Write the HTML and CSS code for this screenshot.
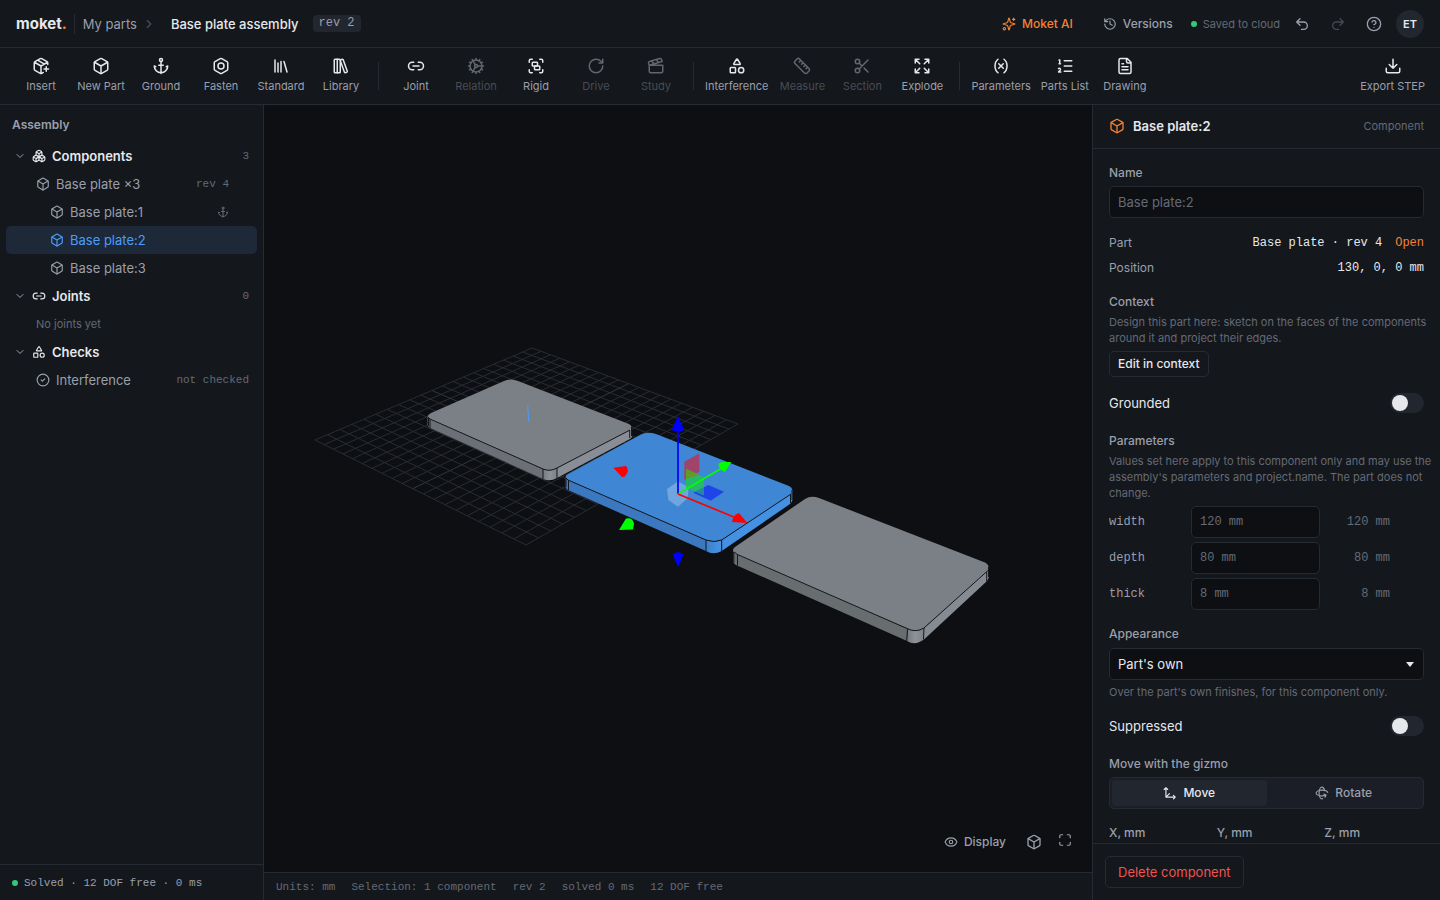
FILE: index.html
```html
<!DOCTYPE html>
<html lang="en">
<head>
<meta charset="utf-8">
<title>Base plate assembly - moket.</title>
<link rel="stylesheet" href="styles.css">
</head>
<body>
<svg class="sprite" aria-hidden="true">
  <symbol id="box" viewBox="0 0 24 24"><path d="M21 8a2 2 0 0 0-1-1.73l-7-4a2 2 0 0 0-2 0l-7 4A2 2 0 0 0 3 8v8a2 2 0 0 0 1 1.73l7 4a2 2 0 0 0 2 0l7-4A2 2 0 0 0 21 16Z"/><path d="m3.3 7 8.7 5 8.7-5M12 22V12"/></symbol>
  <symbol id="package-plus" viewBox="0 0 24 24"><path d="M16 16h6M19 13v6M21 10V8a2 2 0 0 0-1-1.73l-7-4a2 2 0 0 0-2 0l-7 4A2 2 0 0 0 3 8v8a2 2 0 0 0 1 1.73l7 4a2 2 0 0 0 2 0l2-1.14M7.5 4.27l9 5.15M3.29 7 12 12l8.71-5M12 22V12"/></symbol>
  <symbol id="anchor" viewBox="0 0 24 24"><path d="M12 6v16M19 13l2-1a9 9 0 0 1-18 0l2 1M9 11h6"/><circle cx="12" cy="4" r="2"/></symbol>
  <symbol id="nut" viewBox="0 0 24 24"><path d="M21 16V8a2 2 0 0 0-1-1.73l-7-4a2 2 0 0 0-2 0l-7 4A2 2 0 0 0 3 8v8a2 2 0 0 0 1 1.73l7 4a2 2 0 0 0 2 0l7-4A2 2 0 0 0 21 16z"/><circle cx="12" cy="12" r="4"/></symbol>
  <symbol id="library" viewBox="0 0 24 24"><path d="m16 6 4 14M12 6v14M8 8v12M4 4v16"/></symbol>
  <symbol id="library-big" viewBox="0 0 24 24"><rect x="3" y="3" width="8" height="18" rx="1"/><path d="M7 3v18M20.4 18.9c.2.5-.1 1.1-.6 1.3l-1.9.7c-.5.2-1.1-.1-1.3-.6L11.1 5.1c-.2-.5.1-1.1.6-1.3l1.9-.7c.5-.2 1.1.1 1.3.6Z"/></symbol>
  <symbol id="link" viewBox="0 0 24 24"><path d="M9 17H7A5 5 0 0 1 7 7h2M15 7h2a5 5 0 1 1 0 10h-2M8 12h8"/></symbol>
  <symbol id="cog" viewBox="0 0 24 24"><circle cx="12" cy="12" r="8"/><circle cx="12" cy="12" r="2"/><path d="M12 2v2M12 22v-2M17 20.66l-1-1.73M11 10.27 7 3.34M20.66 17l-1.73-1M3.34 7l1.73 1M14 12h8M2 12h2M20.66 7l-1.73 1M3.34 17l1.73-1M17 3.34l-1 1.73M11 13.73l-4 6.93"/></symbol>
  <symbol id="group" viewBox="0 0 24 24"><path d="M3 7V5c0-1.1.9-2 2-2h2M17 3h2c1.1 0 2 .9 2 2v2M21 17v2c0 1.1-.9 2-2 2h-2M7 21H5c-1.1 0-2-.9-2-2v-2"/><rect x="7" y="7" width="7" height="5" rx="1"/><rect x="10" y="12" width="7" height="5" rx="1"/></symbol>
  <symbol id="rotate" viewBox="0 0 24 24"><path d="M21 12a9 9 0 1 1-9-9c2.52 0 4.93 1 6.74 2.74L21 8M21 3v5h-5"/></symbol>
  <symbol id="clapper" viewBox="0 0 24 24"><path d="M20.2 6 3 11l-.9-2.4c-.3-1.1.3-2.2 1.3-2.5l13.5-4c1.1-.3 2.2.3 2.5 1.3ZM6.2 5.3l3.1 3.9M12.4 3.4l3.1 4M3 11h18v8a2 2 0 0 1-2 2H5a2 2 0 0 1-2-2Z"/></symbol>
  <symbol id="shapes" viewBox="0 0 24 24"><path d="M8.3 10a.7.7 0 0 1-.626-1.079L11.4 3a.7.7 0 0 1 1.198-.043L16.3 8.9a.7.7 0 0 1-.572 1.1Z"/><rect x="3" y="14" width="7" height="7" rx="1"/><circle cx="17.5" cy="17.5" r="3.5"/></symbol>
  <symbol id="ruler" viewBox="0 0 24 24"><path d="M21.3 15.3a2.4 2.4 0 0 1 0 3.4l-2.6 2.6a2.4 2.4 0 0 1-3.4 0L2.7 8.7a2.41 2.41 0 0 1 0-3.4l2.6-2.6a2.41 2.41 0 0 1 3.4 0ZM14.5 12.5l2-2M11.5 9.5l2-2M8.5 6.5l2-2M17.5 15.5l2-2"/></symbol>
  <symbol id="scissors" viewBox="0 0 24 24"><circle cx="6" cy="6" r="3"/><circle cx="6" cy="18" r="3"/><path d="M8.12 8.12 12 12M20 4 8.12 15.88M14.8 14.8 20 20"/></symbol>
  <symbol id="expand" viewBox="0 0 24 24"><path d="m15 15 6 6M15 9l6-6M21 16v5h-5M21 8V3h-5M3 16v5h5M3 21l6-6M3 8V3h5M9 9 3 3"/></symbol>
  <symbol id="variable" viewBox="0 0 24 24"><path d="M8 21s-4-3-4-9 4-9 4-9M16 3s4 3 4 9-4 9-4 9M15 9l-6 6M9 9l6 6"/></symbol>
  <symbol id="list" viewBox="0 0 24 24"><path d="M11 5h10M11 12h10M11 19h10M4 4h1v5M4 9h2M6.5 20H3.4c0-1 2.6-1.925 2.6-3.5a1.5 1.5 0 0 0-2.6-1.02"/></symbol>
  <symbol id="file" viewBox="0 0 24 24"><path d="M15 2H6a2 2 0 0 0-2 2v16a2 2 0 0 0 2 2h12a2 2 0 0 0 2-2V7ZM14 2v4a2 2 0 0 0 2 2h4M10 9H8M16 13H8M16 17H8"/></symbol>
  <symbol id="download" viewBox="0 0 24 24"><path d="M12 15V3M21 15v4a2 2 0 0 1-2 2H5a2 2 0 0 1-2-2v-4M7 10l5 5 5-5"/></symbol>
  <symbol id="sparkles" viewBox="0 0 24 24"><path d="M9.937 15.5A2 2 0 0 0 8.5 14.063l-6.135-1.582a.5.5 0 0 1 0-.962L8.5 9.936A2 2 0 0 0 9.937 8.5l1.582-6.135a.5.5 0 0 1 .963 0L14.063 8.5A2 2 0 0 0 15.5 9.937l6.135 1.581a.5.5 0 0 1 0 .964L15.5 14.063a2 2 0 0 0-1.437 1.437l-1.582 6.135a.5.5 0 0 1-.963 0zM20 2v4M22 4h-4"/><circle cx="4" cy="20" r="2"/></symbol>
  <symbol id="history" viewBox="0 0 24 24"><path d="M3 12a9 9 0 1 0 9-9 9.75 9.75 0 0 0-6.74 2.74L3 8M3 3v5h5M12 7v5l4 2"/></symbol>
  <symbol id="undo" viewBox="0 0 24 24"><path d="M9 14 4 9l5-5M4 9h10.5a5.5 5.5 0 0 1 0 11H11"/></symbol>
  <symbol id="redo" viewBox="0 0 24 24"><path d="m15 14 5-5-5-5M20 9H9.5a5.5 5.5 0 0 0 0 11H13"/></symbol>
  <symbol id="help" viewBox="0 0 24 24"><circle cx="12" cy="12" r="10"/><path d="M9.09 9a3 3 0 0 1 5.83 1c0 2-3 3-3 3M12 17h.01"/></symbol>
  <symbol id="right" viewBox="0 0 24 24"><path d="m9 18 6-6-6-6"/></symbol>
  <symbol id="down" viewBox="0 0 24 24"><path d="m6 9 6 6 6-6"/></symbol>
  <symbol id="boxes" viewBox="0 0 24 24"><path d="M2.97 12.92A2 2 0 0 0 2 14.63v3.24a2 2 0 0 0 .97 1.71l3 1.8a2 2 0 0 0 2.06 0L12 19v-5.5l-5-3-4.03 2.42ZM7 16.5l-4.74-2.85M7 16.5l5-3M7 16.5v5.17M12 13.5V19l3.97 2.38a2 2 0 0 0 2.06 0l3-1.8a2 2 0 0 0 .97-1.71v-3.24a2 2 0 0 0-.97-1.71L17 10.5l-5 3ZM17 16.5l-5-3M17 16.5l4.74-2.85M17 16.5v5.17M7.97 4.42A2 2 0 0 0 7 6.13v4.37l5 3 5-3V6.13a2 2 0 0 0-.97-1.71l-3-1.8a2 2 0 0 0-2.06 0l-3 1.8ZM12 8 7.26 5.15M12 8l4.74-2.85M12 13.5V8"/></symbol>
  <symbol id="check" viewBox="0 0 24 24"><circle cx="12" cy="12" r="10"/><path d="m9 12 2 2 4-4"/></symbol>
  <symbol id="eye" viewBox="0 0 24 24"><path d="M2.062 12.348a1 1 0 0 1 0-.696 10.75 10.75 0 0 1 19.876 0 1 1 0 0 1 0 .696 10.75 10.75 0 0 1-19.876 0"/><circle cx="12" cy="12" r="3"/></symbol>
  <symbol id="corners" viewBox="0 0 24 24"><path d="M8 3H5a2 2 0 0 0-2 2v3M21 8V5a2 2 0 0 0-2-2h-3M3 16v3a2 2 0 0 0 2 2h3M16 21h3a2 2 0 0 0 2-2v-3"/></symbol>
  <symbol id="move3d" viewBox="0 0 24 24"><path d="M5 3v16h16M5 19l6-6M2 6l3-3 3 3M18 16l3 3-3 3"/></symbol>
  <symbol id="rotate3d" viewBox="0 0 24 24"><path d="M16.466 7.5C15.643 4.237 13.952 2 12 2 9.239 2 7 6.477 7 12s2.239 10 5 10c.342 0 .677-.069 1-.2M15.194 13.707l3.814 1.86-1.86 3.814M19 15.57c-1.804.885-4.274 1.43-7 1.43-5.523 0-10-2.239-10-5s4.477-5 10-5c4.838 0 8.873 1.718 9.8 4"/></symbol>
</svg>

<div class="app">
  <header class="topbar">
    <a class="logo" href="#">moket<span class="logo-dot">.</span></a>
    <nav class="crumbs" aria-label="Breadcrumb">
      <a class="crumb" href="#">My parts</a>
      <svg class="icon icon-sm chevron"><use href="#right"/></svg>
    </nav>
    <h1 class="doc-title">Base plate assembly</h1>
    <span class="badge">rev 2</span>
    <div class="top-actions">
      <button class="text-btn accent"><svg class="icon icon-sm"><use href="#sparkles"/></svg>Moket AI</button>
      <button class="text-btn"><svg class="icon icon-sm"><use href="#history"/></svg>Versions</button>
      <span class="saved"><span class="dot"></span>Saved to cloud</span>
      <div class="icon-group">
        <button class="icon-btn" aria-label="Undo"><svg class="icon"><use href="#undo"/></svg></button>
        <button class="icon-btn" aria-label="Redo" disabled><svg class="icon"><use href="#redo"/></svg></button>
        <button class="icon-btn" aria-label="Help"><svg class="icon"><use href="#help"/></svg></button>
      </div>
      <button class="avatar" aria-label="Account">ET</button>
    </div>
  </header>

  <div class="toolbar" role="toolbar" aria-label="Tools">
    <button class="tool"><svg class="icon icon-lg"><use href="#package-plus"/></svg>Insert</button>
    <button class="tool"><svg class="icon icon-lg"><use href="#box"/></svg>New Part</button>
    <button class="tool"><svg class="icon icon-lg"><use href="#anchor"/></svg>Ground</button>
    <button class="tool"><svg class="icon icon-lg"><use href="#nut"/></svg>Fasten</button>
    <button class="tool"><svg class="icon icon-lg"><use href="#library"/></svg>Standard</button>
    <button class="tool"><svg class="icon icon-lg"><use href="#library-big"/></svg>Library</button>
    <span class="tool-sep"></span>
    <button class="tool"><svg class="icon icon-lg"><use href="#link"/></svg>Joint</button>
    <button class="tool" disabled><svg class="icon icon-lg"><use href="#cog"/></svg>Relation</button>
    <button class="tool"><svg class="icon icon-lg"><use href="#group"/></svg>Rigid</button>
    <button class="tool" disabled><svg class="icon icon-lg"><use href="#rotate"/></svg>Drive</button>
    <button class="tool" disabled><svg class="icon icon-lg"><use href="#clapper"/></svg>Study</button>
    <span class="tool-sep"></span>
    <button class="tool"><svg class="icon icon-lg"><use href="#shapes"/></svg>Interference</button>
    <button class="tool" disabled><svg class="icon icon-lg"><use href="#ruler"/></svg>Measure</button>
    <button class="tool" disabled><svg class="icon icon-lg"><use href="#scissors"/></svg>Section</button>
    <button class="tool"><svg class="icon icon-lg"><use href="#expand"/></svg>Explode</button>
    <span class="tool-sep"></span>
    <button class="tool"><svg class="icon icon-lg"><use href="#variable"/></svg>Parameters</button>
    <button class="tool"><svg class="icon icon-lg"><use href="#list"/></svg>Parts List</button>
    <button class="tool"><svg class="icon icon-lg"><use href="#file"/></svg>Drawing</button>
    <button class="tool tool-end"><svg class="icon icon-lg"><use href="#download"/></svg>Export STEP</button>
  </div>

  <div class="workspace">
    <aside class="sidebar">
      <h2 class="side-title">Assembly</h2>
      <div class="tree">
        <button class="row group"><svg class="icon icon-xs"><use href="#down"/></svg><svg class="icon icon-sm"><use href="#boxes"/></svg><span>Components</span><span class="meta">3</span></button>
        <button class="row part"><svg class="icon icon-sm"><use href="#box"/></svg><span>Base plate ×3</span><span class="meta">rev 4</span></button>
        <button class="row instance"><svg class="icon icon-sm"><use href="#box"/></svg><span>Base plate:1</span><svg class="icon icon-xs meta"><use href="#anchor"/></svg></button>
        <button class="row instance selected"><svg class="icon icon-sm"><use href="#box"/></svg><span>Base plate:2</span></button>
        <button class="row instance"><svg class="icon icon-sm"><use href="#box"/></svg><span>Base plate:3</span></button>
        <button class="row group"><svg class="icon icon-xs"><use href="#down"/></svg><svg class="icon icon-sm"><use href="#link"/></svg><span>Joints</span><span class="meta">0</span></button>
        <p class="row empty">No joints yet</p>
        <button class="row group"><svg class="icon icon-xs"><use href="#down"/></svg><svg class="icon icon-sm"><use href="#shapes"/></svg><span>Checks</span></button>
        <button class="row check"><svg class="icon icon-sm"><use href="#check"/></svg><span>Interference</span><span class="meta">not checked</span></button>
      </div>
      <div class="side-foot"><span class="dot"></span>Solved · 12 DOF free · 0 ms</div>
    </aside>

    <main class="stage">
      <div class="viewport">
        <svg class="scene" viewBox="264 105 828 767" role="img" aria-label="Three base plates on a grid">
          <defs>
            <linearGradient id="g1"><stop offset="0" stop-color="#777a80"/><stop offset=".5" stop-color="#8e9298"/><stop offset="1" stop-color="#7c8087"/></linearGradient>
            <linearGradient id="g2"><stop offset="0" stop-color="#3d80ca"/><stop offset="1" stop-color="#4795e9"/></linearGradient>
          </defs>
          <path id="grid" class="grid"/>
          <path id="axes" class="grid-axis"/>
          <g class="plate">
            <path fill="#6c6f76" d="M427.5 417V425Q428 427 430 428L543 479V469Z"/>
            <path fill="#898d95" d="M557 468 632 427V436Q632 438 630 439L557 478Z"/>
            <path fill="url(#g1)" d="M543 469Q550 472 557 468V478Q550 482 543 479Z"/>
            <path fill="#7b7f86" d="M430 419Q425 416 431 413L504 381Q511 378 518 381L629 424Q634 427 629 431L557 468Q550 472 543 469Z"/>
            <path class="edge" d="M428 417 430 419 543 469Q550 472 557 468L630 430M543 469V479M557 468V478M430 419V428M428.5 418V426M629.700 430V438M631.500 427V436"/>
          </g>
          <path stroke="#4a9dff" d="m527.700 405 1 16.700"/>
          <g class="plate">
            <path fill="#3b78c0" d="M565.500 478V487Q566 489 568 490L706 551V540Z"/>
            <path fill="#4491e4" d="M721.700 540 792.500 490V500Q792 502 790 504L721.700 551Z"/>
            <path fill="url(#g2)" d="M706 540Q714 543 721.700 540V551Q713 555.500 706 551Z"/>
            <path fill="#3f86d5" d="M568 480Q563 477 568 474L640 435Q647 431 656 434L789 486Q795 489 790 494L721.700 540Q714 543 706 540Z"/>
            <path class="edge" d="M566 478 568 480 706 540Q714 543 721.700 540L791 494M706 540V551M721.700 540V551M568.500 480V490M566 478V487M790.500 494V503M792 490V500"/>
          </g>
          <g class="plate">
            <path fill="#686d70" d="M733.300 551V562Q734 564.500 737 565.500L907 641V628.700Z"/>
            <path fill="#868a92" d="M924 628 989 568V577Q988 580 986 582L924 639.500Z"/>
            <path fill="url(#g1)" d="M907.500 628.700Q916 633 924 628V639.500Q915 646 907 641Z"/>
            <path fill="#7b7f86" d="M737.500 554.500Q730 551 735 547L805 499Q811 495 819 498L985 562.500Q991 566 987 571L924 628Q916 633 907.500 628.700Z"/>
            <path class="edge" d="M734 552 737.500 554.500 907.500 628.700Q916 633 924 628L988 570.500M907.500 629 906.700 641M924 628 923.500 639.500M737.500 554.500V565.500M733.800 552V562.500M986.700 572V581.500M988.500 567V577"/>
          </g>
          <g>
            <path fill="#fff" fill-opacity=".26" d="M667 489 678 481.300 688.700 487.300 687.700 498.300 678 506.700 668.300 500Z"/>
            <path fill="#1f44e8" d="M693.300 492.700 708.300 485 724 491.700 710.700 500.700Z"/>
            <path fill="#a0446c" d="M684.300 461.700 699.300 453.300V471.700L684.300 480Z"/>
            <path fill="#26b96e" d="M686 468.700 704 477.300V495.300L686 487.300Z"/>
            <path fill="#629c28" d="M686 468.700 699.300 475 686 479Z"/>
            <path fill="#2588a0" d="M695 491.500 704 487V495.300Z"/>
            <path stroke="#00f" stroke-width="1.700" d="M678 494V430"/>
            <path fill="#00f" d="M678 416 684.300 430Q678 433 671.700 430Z"/>
            <path stroke="#0f0" stroke-width="1.700" d="M678 494 722 468"/>
            <path fill="#0f0" d="M731.300 462 725 472Q719 470 718.300 464Q720 462.500 722 462Z"/>
            <path stroke="red" stroke-width="1.700" d="M678 494 735 517.500"/>
            <path fill="red" d="M747.300 523 732 522Q733 515 739 513Z"/>
            <path fill="red" d="M613.300 467.700 626 466Q630 470 625 476.500L622 477Z"/>
            <path fill="#0f0" d="M619 530 626 518.500Q633 517 634 524L633 529.500Z"/>
            <path fill="#00f" d="M678 567 672.700 554.500Q678 550 683.500 554.500Z"/>
          </g>
        </svg>
        <div class="view-controls">
          <button class="text-btn"><svg class="icon icon-sm"><use href="#eye"/></svg>Display</button>
          <button class="icon-btn" aria-label="View cube"><svg class="icon"><use href="#box"/></svg></button>
          <button class="icon-btn fit" aria-label="Fit view"><svg class="icon"><use href="#corners"/></svg></button>
        </div>
      </div>
      <footer class="status"><span>Units: mm</span><span>Selection: 1 component</span><span>rev 2</span><span>solved 0 ms</span><span>12 DOF free</span></footer>
    </main>

    <aside class="inspector">
      <header class="insp-head"><svg class="icon"><use href="#box"/></svg><h2 class="insp-title">Base plate:2</h2><span class="insp-kind">Component</span></header>
      <form class="insp-body">
        <div class="field"><label class="label" for="name">Name</label><input class="input" id="name" placeholder="Base plate:2"></div>
        <dl class="facts">
          <div class="fact"><dt>Part</dt><dd>Base plate · rev 4<a class="open" href="#">Open</a></dd></div>
          <div class="fact"><dt>Position</dt><dd>130, 0, 0 mm</dd></div>
        </dl>
        <section class="field">
          <h3 class="label">Context</h3>
          <p class="hint">Design this part here: sketch on the faces of the components around it and project their edges.</p>
          <button type="button" class="btn btn-sm">Edit in context</button>
        </section>
        <div class="switch-row"><label for="grounded">Grounded</label><input type="checkbox" class="switch" id="grounded"></div>
        <section class="field">
          <h3 class="label">Parameters</h3>
          <p class="hint">Values set here apply to this component only and may use the assembly's parameters and project.name. The part does not change.</p>
          <div class="params">
            <div class="param"><label for="width">width</label><input class="input" id="width" placeholder="120 mm"><output>120 mm</output></div>
            <div class="param"><label for="depth">depth</label><input class="input" id="depth" placeholder="80 mm"><output>80 mm</output></div>
            <div class="param"><label for="thick">thick</label><input class="input" id="thick" placeholder="8 mm"><output>8 mm</output></div>
          </div>
        </section>
        <div class="field">
          <label class="label" for="appearance">Appearance</label>
          <div class="select-wrap"><select class="input" id="appearance"><option>Part's own</option></select><svg class="caret" viewBox="0 0 8 5"><path d="M0 0h8L4 5Z"/></svg></div>
          <p class="hint">Over the part's own finishes, for this component only.</p>
        </div>
        <div class="switch-row"><label for="suppressed">Suppressed</label><input type="checkbox" class="switch" id="suppressed"></div>
        <section class="field">
          <h3 class="label">Move with the gizmo</h3>
          <div class="segmented">
            <button type="button" class="segment active"><svg class="icon icon-sm"><use href="#move3d"/></svg>Move</button>
            <button type="button" class="segment"><svg class="icon icon-sm"><use href="#rotate3d"/></svg>Rotate</button>
          </div>
        </section>
        <div class="coords">
          <div class="field"><label class="label" for="cx">X, mm</label><input class="input" id="cx"></div>
          <div class="field"><label class="label" for="cy">Y, mm</label><input class="input" id="cy"></div>
          <div class="field"><label class="label" for="cz">Z, mm</label><input class="input" id="cz"></div>
        </div>
      </form>
      <footer class="insp-foot"><button class="btn danger">Delete component</button></footer>
    </aside>
  </div>
</div>
<script src="grid.js"></script>
</body>
</html>
```
FILE: grid.js
```js
// Ground grid: a square of CELLS x CELLS projected onto a quadrilateral.
const CELLS = 20;
const [p0, p1, p2, p3] = [[315, 440], [532, 348], [738, 424], [526, 545]];

const dx1 = p1[0] - p2[0], dx2 = p3[0] - p2[0], sx = p0[0] - p1[0] + p2[0] - p3[0];
const dy1 = p1[1] - p2[1], dy2 = p3[1] - p2[1], sy = p0[1] - p1[1] + p2[1] - p3[1];
const det = dx1 * dy2 - dx2 * dy1;
const g = (sx * dy2 - dx2 * sy) / det;
const h = (dx1 * sy - sx * dy1) / det;

function project(u, v) {
  const w = g * u + h * v + 1;
  const x = ((p1[0] - p0[0] + g * p1[0]) * u + (p3[0] - p0[0] + h * p3[0]) * v + p0[0]) / w;
  const y = ((p1[1] - p0[1] + g * p1[1]) * u + (p3[1] - p0[1] + h * p3[1]) * v + p0[1]) / w;
  return x.toFixed(2) + " " + y.toFixed(2);
}

let lines = "", axes = "";
for (let i = 0; i <= CELLS; i++) {
  const t = i / CELLS;
  const pair = `M${project(t, 0)}L${project(t, 1)}M${project(0, t)}L${project(1, t)}`;
  if (i === CELLS / 2) axes += pair; else lines += pair;
}
document.getElementById("grid").setAttribute("d", lines);
document.getElementById("axes").setAttribute("d", axes);
```
FILE: styles.css
```css
:root {
  --bg: #14171c;
  --canvas: #0d0f13;
  --raised: #1b1e26;
  --chip: #22262f;
  --line: #262a33;
  --text: #e6e8ec;
  --muted: #9a9fab;
  --dim: #646a76;
  --accent: #f58235;
  --blue: #4a9df8;
  --green: #34c77b;
  --sans: Inter, "Liberation Sans", sans-serif;
  --mono: "Liberation Mono", monospace;
}
* { box-sizing: border-box; }
body { margin: 0; background: var(--bg); color: var(--text); font: 13px/16px var(--sans); }
button, input, select { font: inherit; color: inherit; }
button { background: none; border: 0; padding: 0; cursor: pointer; }
a { color: inherit; text-decoration: none; }
h1, h2, h3, p, dl, dd { margin: 0; font-size: inherit; }
.sprite { display: none; }
.icon { width: 16px; height: 16px; flex: none; fill: none; stroke: currentColor; stroke-width: 2; stroke-linecap: round; stroke-linejoin: round; }
.icon-xs { width: 12px; height: 12px; }
.icon-sm { width: 14px; height: 14px; }
.icon-lg { width: 18px; height: 18px; }
.dot { width: 6px; height: 6px; border-radius: 50%; background: var(--green); flex: none; }

.app { height: 100vh; display: flex; flex-direction: column; overflow: hidden; }

.topbar { height: 48px; flex: none; display: flex; align-items: center; padding: 0 16px; border-bottom: 1px solid var(--line); }
.logo { font-size: 15px; font-weight: 700; padding-right: 7px; }
.logo-dot { color: var(--accent); }
.crumbs { display: flex; align-items: center; gap: 5px; height: 20px; padding-left: 8px; border-left: 1px solid var(--line); color: var(--muted); }
.chevron { color: #4a4f5a; }
.doc-title { font-weight: 500; margin-left: 15px; }
.badge { margin-left: 14px; padding: 0 6px; border-radius: 4px; background: var(--chip); color: var(--muted); font: 12px/17px var(--mono); }
.top-actions { margin-left: auto; display: flex; align-items: center; }
.text-btn { display: flex; align-items: center; gap: 6px; color: var(--muted); font-size: 12px; font-weight: 500; }
.top-actions .text-btn { margin-right: 30px; }
.top-actions .text-btn + .text-btn { margin-right: 18px; }
.text-btn.accent { color: var(--accent); }
.saved { display: flex; align-items: center; gap: 6px; color: var(--dim); font-size: 11px; }
.icon-group { display: flex; gap: 8px; margin: 0 8px; }
.icon-btn { width: 28px; height: 28px; display: grid; place-items: center; color: var(--muted); }
.icon-btn:disabled { color: #434853; }
.avatar { width: 28px; height: 28px; border-radius: 50%; background: var(--chip); font-size: 11px; font-weight: 600; }

.toolbar { height: 57px; flex: none; display: flex; gap: 2px; padding: 0 12px; border-bottom: 1px solid var(--line); }
.tool { min-width: 58px; padding: 0 3px 2px; display: flex; flex-direction: column; align-items: center; justify-content: center; gap: 4px; color: var(--muted); font-size: 11px; line-height: 14px; white-space: nowrap; }
.tool .icon { color: var(--text); }
.tool:disabled { color: #484c55; }
.tool:disabled .icon { color: #62666e; }
.tool-sep { width: 1px; height: 28px; align-self: center; margin: 0 6px; background: var(--line); }
.tool-end { margin-left: auto; }

.workspace { flex: 1; min-height: 0; display: grid; grid-template-columns: 264px minmax(0, 1fr) 348px; }

.sidebar { display: flex; flex-direction: column; border-right: 1px solid var(--line); }
.side-title { padding: 12px 12px 9px; font-size: 12px; font-weight: 600; color: var(--muted); }
.tree { flex: 1; padding: 0 6px; }
.row { width: 100%; height: 28px; display: flex; align-items: center; gap: 6px; padding: 0 8px; border-radius: 5px; color: var(--muted); text-align: left; }
.row .meta { margin-left: auto; color: var(--dim); font: 11px/16px var(--mono); }
.group { color: var(--text); font-weight: 600; }
.group .icon-xs { color: var(--muted); }
.part { padding: 0 28px 0 30px; }
.instance { padding: 0 28px 0 44px; }
.check { padding-left: 30px; }
.selected { background: #1d2939; color: var(--blue); }
.empty { padding-left: 30px; font-size: 11px; color: var(--dim); }
.side-foot { height: 36px; display: flex; align-items: center; gap: 6px; padding: 0 12px; border-top: 1px solid var(--line); color: var(--muted); font: 11px/16px var(--mono); }

.stage { display: flex; flex-direction: column; min-width: 0; min-height: 0; }
.viewport { position: relative; flex: 1; min-height: 0; background: var(--canvas); }
.scene { display: block; width: 100%; height: 100%; fill: none; }
.grid { stroke: #282c34; stroke-width: 1; }
.grid-axis { stroke: #303740; stroke-width: 1; }
.edge { stroke: #14171c; stroke-width: 1; }
.view-controls { position: absolute; right: 13px; bottom: 16px; display: flex; align-items: center; gap: 3px; }
.view-controls .text-btn { margin-right: 11px; }
.fit .icon { width: 14px; height: 14px; }
.fit { padding-bottom: 5px; }
.status { height: 28px; flex: none; display: flex; align-items: center; gap: 16px; padding: 0 12px; border-top: 1px solid var(--line); color: var(--dim); font: 11px/16px var(--mono); }

.inspector { display: flex; flex-direction: column; min-height: 0; border-left: 1px solid var(--line); }
.insp-head { height: 44px; flex: none; display: flex; align-items: center; gap: 8px; padding: 0 16px 2px; border-bottom: 1px solid var(--line); }
.insp-head .icon { color: var(--accent); }
.insp-title { font-weight: 600; }
.insp-kind { margin-left: auto; font-size: 11px; color: var(--dim); }
.insp-body { flex: 1; min-height: 0; overflow: hidden; display: flex; flex-direction: column; gap: 16px; padding: 16px; }
.insp-body > * { flex: none; }
.field { display: flex; flex-direction: column; gap: 5px; }
.label { font-size: 12px; font-weight: 500; color: var(--muted); }
.input { width: 100%; height: 32px; padding: 0 8px; border: 1px solid var(--line); border-radius: 5px; background: var(--canvas); outline: 0; }
.input::placeholder { color: var(--dim); opacity: 1; }
.facts { display: flex; flex-direction: column; gap: 9px; padding: 1px 0 2px; }
.fact { display: flex; justify-content: space-between; color: var(--muted); }
.fact dt { font-size: 12px; }
.fact dd { color: var(--text); font: 12px/16px var(--mono); }
.open { margin-left: 13px; color: var(--accent); }
.hint { margin: -1px -12px 0 0; font-size: 11px; color: var(--dim); }
.btn { height: 32px; padding: 0 12px; border: 1px solid var(--line); border-radius: 5px; font-weight: 500; }
.btn-sm { height: 26px; padding: 0 8px; font-size: 12px; align-self: flex-start; }
.danger { color: #ef5350; }
.insp-foot .btn { font-weight: 400; }
.switch-row { display: flex; align-items: center; justify-content: space-between; height: 20px; margin-bottom: 4px; }
.switch { appearance: none; width: 34px; height: 20px; margin: 0; padding: 2px; border-radius: 10px; background: var(--chip); }
.switch::before { content: ""; display: block; width: 16px; height: 16px; border-radius: 50%; background: var(--text); }
.switch:checked::before { margin-left: 14px; }
.params { display: flex; flex-direction: column; gap: 4px; font: 12px/16px var(--mono); color: var(--muted); }
.param { display: grid; grid-template-columns: 74px minmax(0, 1fr) 62px 26px; column-gap: 8px; align-items: center; }
.param output { color: var(--dim); text-align: right; }
.select-wrap { display: grid; align-items: center; margin-top: 1px; }
.select-wrap > * { grid-area: 1 / 1; }
.select-wrap select { appearance: none; }
.caret { width: 8px; height: 5px; justify-self: end; margin-right: 10px; fill: var(--text); pointer-events: none; }
.segmented { height: 32px; display: grid; grid-template-columns: 1fr 1fr; padding: 2px; border: 1px solid var(--line); border-radius: 5px; background: var(--raised); }
.segment { display: flex; align-items: center; justify-content: center; gap: 6px; border-radius: 4px; font-size: 12px; font-weight: 500; color: var(--muted); }
.segment.active { background: var(--chip); color: var(--text); }
.coords { display: grid; grid-template-columns: repeat(3, minmax(0, 1fr)); gap: 8px; }
.insp-foot { flex: none; padding: 12px; border-top: 1px solid var(--line); }
```
